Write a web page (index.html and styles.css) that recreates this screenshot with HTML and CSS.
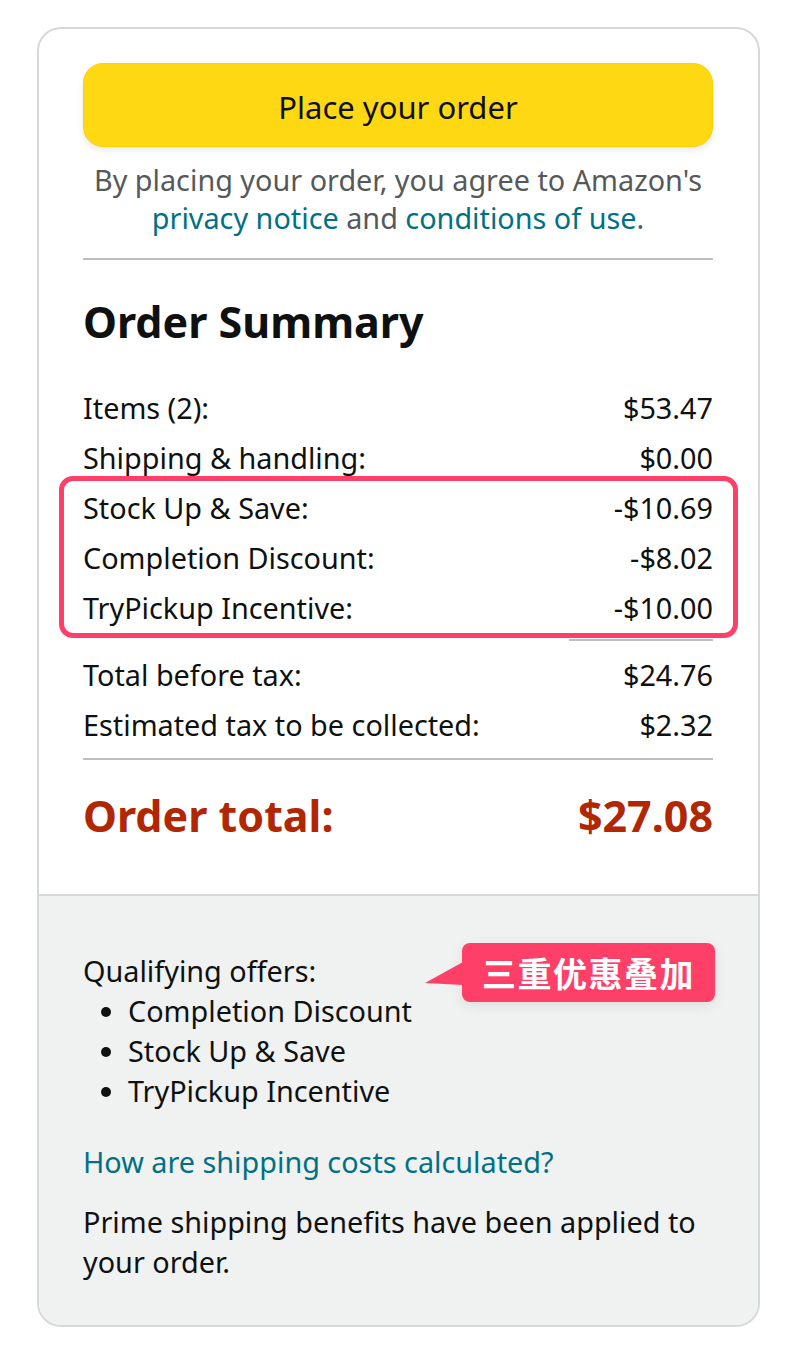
FILE: index.html
```html
<!DOCTYPE html>
<html lang="en">
<head>
<meta charset="utf-8">
<title>Order Summary</title>
<link rel="stylesheet" href="styles.css">
</head>
<body>
<div class="card">
  <div class="top">
    <button class="place-btn" type="button">Place your order</button>
    <p class="terms">By placing your order, you agree to Amazon's<br><a href="#">privacy notice</a> and <a href="#">conditions of use</a>.</p>
    <hr class="rule">
    <h2 class="title">Order Summary</h2>
    <div class="rows">
      <div class="row"><span>Items (2):</span><span>$53.47</span></div>
      <div class="row"><span>Shipping &amp; handling:</span><span>$0.00</span></div>
      <div class="promo">
        <div class="row"><span>Stock Up &amp; Save:</span><span>-$10.69</span></div>
        <div class="row"><span>Completion Discount:</span><span>-$8.02</span></div>
        <div class="row"><span>TryPickup Incentive:</span><span>-$10.00</span></div>
        <span class="highlight"></span>
      </div>
      <hr class="rule short">
      <div class="row"><span>Total before tax:</span><span>$24.76</span></div>
      <div class="row"><span>Estimated tax to be collected:</span><span>$2.32</span></div>
      <hr class="rule">
      <div class="row total"><span>Order total:</span><span>$27.08</span></div>
    </div>
  </div>
  <div class="bottom">
    <div class="offers">
      <p class="offers-title">Qualifying offers:</p>
      <ul class="offers-list">
        <li>Completion Discount</li>
        <li>Stock Up &amp; Save</li>
        <li>TryPickup Incentive</li>
      </ul>
      <div class="badge">
        <svg class="badge-tail" width="38" height="23" viewBox="0 0 38 23"><polygon points="38,0 0,21 38,23" /></svg>
        三重优惠叠加
      </div>
    </div>
    <a class="ship-link" href="#">How are shipping costs calculated?</a>
    <p class="prime">Prime shipping benefits have been applied to your order.</p>
  </div>
</div>
</body>
</html>
```
FILE: styles.css
```css
* { box-sizing: border-box; }
body {
  margin: 0;
  background: #fff;
  font-family: "Noto Sans", "Open Sans", "Liberation Sans", "Noto Sans CJK SC", sans-serif;
  color: #0f1111;
}
.card {
  margin: 27px 0 0 37px;
  width: 723px;
  border: 2px solid #d5d9d9;
  border-radius: 24px;
  overflow: hidden;
}
.top {
  padding: 34px 45px 52px 44px;
  border-bottom: 2px solid #d5d9d9;
}
.place-btn {
  display: block;
  width: 100%;
  height: 84px;
  background: #ffd814;
  border: 1px solid #fcd200;
  border-radius: 20px;
  box-shadow: 0 3px 6px rgba(213, 217, 217, 0.6);
  font: inherit;
  font-size: 31px;
  color: #0f1111;
  padding: 3px 0 0;
}
.terms {
  margin: 14px 0 0;
  text-align: center;
  font-size: 28.8px;
  line-height: 38px;
  color: #565959;
  white-space: nowrap;
}
.terms a, .ship-link {
  color: #007185;
  text-decoration: none;
}
.rule {
  border: 0;
  height: 2px;
  background: #bbbfbf;
  margin: 21px 0 0;
}
.title {
  margin: 37px 0 0;
  font-size: 43px;
  line-height: 50px;
  font-weight: 700;
}
.rows {
  margin-top: 36px;
  font-size: 28.8px;
  line-height: 50px;
}
.row {
  display: flex;
  justify-content: space-between;
}
.promo {
  position: relative;
}
.highlight {
  position: absolute;
  top: -7px;
  bottom: -5px;
  left: -24px;
  right: -25px;
  border: 5px solid #fe3f67;
  border-radius: 14px;
}
.rule.short {
  width: 144px;
  margin: 6px 0 9px auto;
}
.rows .rule:not(.short) {
  margin: 8px 0 0;
}
.row.total {
  margin-top: 30px;
  font-size: 43px;
  line-height: 52px;
  font-weight: 700;
  color: #b12704;
}
.bottom {
  background: #f0f2f2;
  padding: 55px 45px 43px 44px;
  font-size: 28.8px;
  line-height: 40px;
}
.offers {
  position: relative;
}
.offers-title {
  margin: 0;
}
.offers-list {
  margin: 0;
  padding-left: 45px;
}
.badge {
  position: absolute;
  top: -8px;
  left: 379px;
  width: 253px;
  height: 59px;
  background: #fe3f67;
  border-radius: 8px;
  color: #fff;
  font-family: "Noto Sans CJK SC", sans-serif;
  font-weight: 700;
  font-size: 34px;
  line-height: 59px;
  text-align: center;
  letter-spacing: 1.5px;
  box-shadow: 0 4px 14px rgba(0, 0, 0, 0.08);
}
.badge-tail {
  position: absolute;
  left: -37px;
  top: 19px;
  fill: #fe3f67;
}
.ship-link {
  display: block;
  margin-top: 31px;
}
.prime {
  margin: 20px 0 0;
}
```
